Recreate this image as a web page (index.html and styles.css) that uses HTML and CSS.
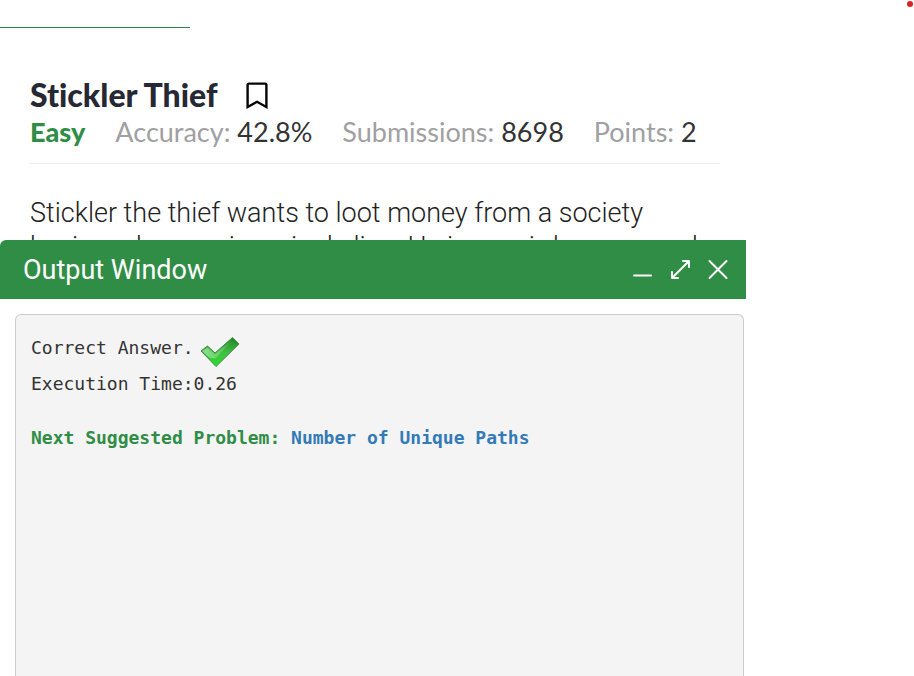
FILE: index.html
```html
<!DOCTYPE html>
<html lang="en">
<head>
<meta charset="utf-8">
<title>Stickler Thief</title>
<link rel="stylesheet" href="styles.css">
</head>
<body>
<div class="page">
  <div class="tab-line"></div>
  <span class="record-dot"></span>
  <main class="problem">
    <header class="problem-head">
      <div class="title-row">
        <h1 class="title">Stickler Thief</h1>
        <button class="bookmark" type="button" aria-label="Bookmark">
          <svg width="22" height="28" viewBox="0 0 22 28" fill="none" stroke="#050505" stroke-width="2.4"><path d="M1.6 26V4Q1.6 2.6 3 2.6H19Q20.4 2.6 20.4 4V26L11 20.8Z"/></svg>
        </button>
      </div>
      <div class="stats">
        <strong class="level">Easy</strong>
        <span class="stat">Accuracy: <b>42.8%</b></span>
        <span class="stat">Submissions: <b>8698</b></span>
        <span class="stat">Points: <b>2</b></span>
      </div>
    </header>
    <p class="description">Stickler the thief wants to loot money from a society<br>having n houses in a single line. He is a weird person and</p>
  </main>
  <section class="output">
    <header class="output-head">
      <h2 class="output-title">Output Window</h2>
      <div class="controls">
        <button type="button" aria-label="Minimize"><svg width="22" height="22" viewBox="0 0 22 22"><path d="M3 16.5H20"/></svg></button>
        <button type="button" aria-label="Expand"><svg width="22" height="22" viewBox="0 0 22 22"><path d="M3 19L20 2M14 2H20V8M3 13V19H9"/></svg></button>
        <button type="button" aria-label="Close"><svg width="22" height="22" viewBox="0 0 22 22"><path d="M2.5 2L19.5 19M19.5 2L2.5 19"/></svg></button>
      </div>
    </header>
    <div class="console">
      <p class="line verdict">Correct Answer.
        <svg class="tick" width="40" height="32" viewBox="0 0 40 32" aria-hidden="true">
          <defs>
            <linearGradient id="tick-body" x1="0" y1="0" x2="0" y2="1"><stop offset="0" stop-color="#178020"/><stop offset=".5" stop-color="#43bd43"/><stop offset="1" stop-color="#25e425"/></linearGradient>
            <linearGradient id="tick-shine" x1="0" y1="0" x2="1" y2="0"><stop offset="0" stop-color="#a5e8a5" stop-opacity=".8"/><stop offset=".6" stop-color="#7fd37f" stop-opacity=".6"/><stop offset="1" stop-color="#2b912d" stop-opacity="0"/></linearGradient>
          </defs>
          <path d="M1 15L7.5 10L15 17L32.5 1.5L39 8L16 30.5Z" fill="url(#tick-body)" stroke="#4b884c" stroke-width="1" stroke-linejoin="round"/>
          <path d="M2.5 15L7.5 11.5L15 18.5L32.5 3L36 6.5Q26 9 16 22Q10 23 7 19.5Z" fill="url(#tick-shine)"/>
        </svg>
      </p>
      <p class="line">Execution Time:0.26</p>
      <p class="line next"><strong>Next Suggested Problem: <a href="#">Number of Unique Paths</a></strong></p>
    </div>
  </section>
</div>
</body>
</html>
```
FILE: styles.css
```css
* { box-sizing: border-box; }
body { margin: 0; background: #fff; color: #333; font-family: Lato, sans-serif; }
h1, h2, p { margin: 0; }
button { padding: 0; border: 0; background: none; display: flex; cursor: pointer; }
.page { position: relative; min-height: 100vh; overflow: hidden; }
.tab-line { width: 190px; height: 28px; border-bottom: 1px solid #2f8350; }
.record-dot { position: absolute; top: 1px; right: 1px; width: 6px; height: 6px; border-radius: 50%; background: #e02020; }
.problem { width: 82%; padding: 47px 29px 0 30px; }
.problem-head { padding-bottom: 14px; border-bottom: 1px solid #ececec; }
.title-row { display: flex; align-items: center; gap: 28px; height: 40px; }
.title { font-size: 32px; line-height: 40px; font-weight: 900; font-variant-ligatures: none; color: #262833; }
.stats { display: flex; gap: 30px; font-size: 27px; line-height: 34px; white-space: nowrap; }
.level { color: #308d46; font-weight: 900; }
.stat { color: #a0a0a3; }
.stat b { color: #333; font-weight: 400; }
.description { padding-top: 32px; font: 300 27px/34px Roboto, sans-serif; white-space: nowrap; color: #222; }
.output { position: absolute; top: 240px; bottom: 0; left: 0; width: 82%; padding-right: 3px; display: flex; flex-direction: column; background: #fff; }
.output-head { display: flex; align-items: center; justify-content: space-between; height: 59px; padding: 0 17px 0 23px; background: #308d46; border-top-left-radius: 6px; color: #fff; }
.output-title { font: 400 27px/36px Roboto, sans-serif; }
.controls { display: flex; gap: 16px; }
.controls svg { fill: none; stroke: #fff; stroke-width: 2; stroke-linecap: round; stroke-linejoin: round; }
.console { flex: 1; margin: 15px 2px 0 15px; padding: 15px; border: 1px solid #ccc; border-bottom: 0; border-radius: 6px 6px 0 0; background: #f4f4f4; font: 18px/36px "DejaVu Sans Mono", monospace; color: #333; }
.verdict { display: flex; gap: 6px; align-items: center; height: 36px; }
.tick { margin-top: 8px; }
.next { margin-top: 18px; color: #308d46; }
.next a { color: #337ab7; text-decoration: none; }
```
